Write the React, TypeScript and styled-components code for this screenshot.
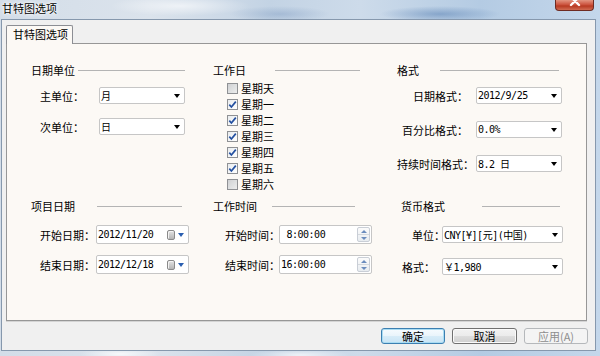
import React from 'react';
import styled, { createGlobalStyle } from 'styled-components';

const GlobalStyle = createGlobalStyle`
  html, body { margin: 0; padding: 0; }
  body {
    width: 600px; height: 356px; overflow: hidden;
    font-family: "Noto Sans CJK SC", "Noto Sans", sans-serif;
    font-size: 11px; color: #111;
  }
  * { box-sizing: border-box; }
`;

const Desktop = styled.div`
  width: 600px;
  height: 356px;
  display: flex;
  flex-direction: column;
  background:
    radial-gradient(ellipse 40px 6px at 120px 354px, rgba(255,255,255,0.8), transparent),
    radial-gradient(ellipse 50px 6px at 300px 355px, rgba(255,255,255,0.7), transparent),
    radial-gradient(ellipse 60px 8px at 440px 14px, rgba(90,130,180,0.55), transparent),
    radial-gradient(ellipse 50px 8px at 280px 14px, rgba(120,150,190,0.4), transparent),
    radial-gradient(ellipse 70px 10px at 180px 6px, rgba(255,255,255,0.6), transparent),
    linear-gradient(90deg, #d3dde8 0%, #dbe3ec 25%, #c3d3e4 45%, #cddbea 60%, #b4cbe3 80%, #c4d7eb 100%);
`;

const TitleBar = styled.div`
  height: 19px;
  flex: none;
  display: flex;
  justify-content: space-between;
  align-items: flex-start;
  padding: 0 6px 0 2px;
`;

const TitleText = styled.span`
  font-size: 11px;
  line-height: 14px;
  margin-top: 1px;
  color: #000;
  text-shadow: 0 0 5px #fff, 0 0 3px #fff, 0 0 1px #fff;
`;

const CloseButton = styled.div`
  width: 39px;
  height: 11px;
  overflow: hidden;
  border: 1px solid #6e2b22;
  border-top: none;
  border-radius: 0 0 4px 4px;
  background: linear-gradient(#e39480, #cc5540 45%, #b83a22 60%, #d06b52);
  display: flex;
  justify-content: center;
  align-items: flex-start;
`;

const Window = styled.div`
  flex: none;
  height: 332px;
  margin: 0 4px 0 1px;
  background: #f0f0f0;
  border: 1px solid #8698ad;
  padding: 5px 8px 6px 4px;
  display: flex;
  flex-direction: column;
`;

const TabStrip = styled.div`
  height: 18px;
  flex: none;
  display: flex;
  align-items: flex-start;
`;

const Tab = styled.div`
  position: relative;
  z-index: 1;
  width: 67px;
  height: 19px;
  border: 1px solid #8c8e94;
  border-bottom: none;
  border-radius: 2px 2px 0 0;
  background: #fcf9f5;
  padding-left: 6px;
  line-height: 17px;
  font-size: 11px;
  color: #000;
`;

const Panel = styled.div`
  flex: 1;
  border: 1px solid #979797;
  box-shadow: 0 1px 0 #d4d4d4;
  background: #fcf9f5;
  padding: 19px 0 0 24px;
  display: grid;
  grid-template-columns: 182px 184px 1fr;
  grid-template-rows: 136px 1fr;
`;

const Section = styled.div`
  display: flex;
  flex-direction: column;
`;

const Header = styled.div<{ $w: number; $indent?: number }>`
  display: flex;
  align-items: center;
  height: 14px;
  width: ${p => p.$w}px;
  padding-left: ${p => p.$indent ?? 0}px;
`;

const HeaderLabel = styled.span<{ $lw: number }>`
  width: ${p => p.$lw}px;
  flex: none;
  white-space: nowrap;
  line-height: 14px;
  color: #000;
`;

const HeaderRule = styled.div`
  flex: 1;
  height: 1px;
  background: #b4b4b4;
`;

const FieldRow = styled.div<{ $mt: number; $h: number }>`
  display: flex;
  align-items: center;
  margin-top: ${p => p.$mt}px;
  height: ${p => p.$h}px;
`;

const FieldLabel = styled.span<{ $w: number; $indent: number }>`
  width: ${p => p.$w}px;
  padding-left: ${p => p.$indent}px;
  flex: none;
  white-space: nowrap;
  color: #000;
`;

const Box = styled.div<{ $w: number }>`
  width: ${p => p.$w}px;
  height: 100%;
  border: 1px solid #c6c6c6;
  border-radius: 2px;
  background: #fff;
  display: flex;
  align-items: center;
  padding: 0 4px 0 1px;
  gap: 3px;
`;

const Value = styled.span`
  flex: 1;
  white-space: pre;
  font-family: "DejaVu Sans Mono", "Noto Sans CJK SC", monospace;
  font-size: 10px;
  letter-spacing: -0.5px;
  color: #000;
`;

const DropArrow = styled.span<{ $color?: string }>`
  width: 0;
  height: 0;
  flex: none;
  border-left: 3.5px solid transparent;
  border-right: 3.5px solid transparent;
  border-top: 4px solid ${p => p.$color ?? '#000'};
`;

const CalIcon = styled.span`
  width: 8px;
  height: 10px;
  flex: none;
  border: 1px solid #8a8a8a;
  border-radius: 2px;
  background: linear-gradient(#e2e2e2, #b4b4b4);
  box-shadow: inset 1px 1px 0 #f3f3f3;
`;

const Spinner = styled.div`
  width: 13px;
  height: 15px;
  flex: none;
  margin-right: -3px;
  display: flex;
  flex-direction: column;
  border: 1px solid #c9ced6;
  border-radius: 2px;
  background: linear-gradient(#fbfbfb, #e8ecf0);
`;

const SpinHalf = styled.div<{ $down?: boolean }>`
  flex: 1;
  display: flex;
  align-items: center;
  justify-content: center;
  border-top: ${p => (p.$down ? '1px solid #d3d8de' : 'none')};
  &::after {
    content: "";
    border-left: 3px solid transparent;
    border-right: 3px solid transparent;
    ${p => (p.$down ? 'border-top: 3px solid #6b8cbd;' : 'border-bottom: 3px solid #6b8cbd;')}
  }
`;

const CheckList = styled.div`
  margin-top: 3px;
  padding-left: 14px;
  display: flex;
  flex-direction: column;
`;

const CheckRow = styled.label`
  height: 16px;
  display: flex;
  align-items: center;
  gap: 3px;
  color: #000;
`;

const CheckBox = styled.span<{ $checked: boolean }>`
  width: 11px;
  height: 11px;
  flex: none;
  border: 1px solid #8f9194;
  background: ${p =>
    p.$checked
      ? 'linear-gradient(135deg, #e9ecef, #ffffff)'
      : 'linear-gradient(135deg, #cfd1d3, #eceded)'};
  display: flex;
  align-items: center;
  justify-content: center;
`;

const ButtonBar = styled.div`
  flex: none;
  display: flex;
  justify-content: flex-end;
  gap: 7px;
  margin-top: 7px;
  margin-right: -1px;
  height: 16px;
`;

const Button = styled.div<{ $w: number; $variant?: 'default' | 'disabled' }>`
  width: ${p => p.$w}px;
  height: 16px;
  border-radius: 3px;
  display: flex;
  align-items: center;
  justify-content: center;
  font-size: 11px;
  line-height: 14px;
  border: 1px solid
    ${p => (p.$variant === 'default' ? '#3c7fb1' : p.$variant === 'disabled' ? '#b5b8bb' : '#707070')};
  color: ${p => (p.$variant === 'disabled' ? '#8d8d8d' : '#000')};
  background: ${p =>
    p.$variant === 'disabled'
      ? '#f4f4f4'
      : p.$variant === 'default'
      ? 'linear-gradient(#f6fbfe 0%, #e9f4fb 50%, #d7ecf8 51%, #c9e4f5 100%)'
      : 'linear-gradient(#f2f2f2 0%, #ebebeb 50%, #dddddd 51%, #cfcfcf 100%)'};
  box-shadow: ${p =>
    p.$variant === 'default' ? 'inset 0 0 0 1px #a9dcf3' : p.$variant === 'disabled' ? 'none' : 'inset 0 0 0 1px #fafafa'};
`;

const Check = () => (
  <svg width="9" height="9" viewBox="0 0 9 9">
    <path d="M1.3 4.6 L3.4 7 L7.8 1.6" fill="none" stroke="#2450a0" strokeWidth="1.7" />
  </svg>
);

type SelectProps = { w: number; value: string };
const Select = ({ w, value }: SelectProps) => (
  <Box $w={w}>
    <Value>{value}</Value>
    <DropArrow />
  </Box>
);

const DateBox = ({ value }: { value: string }) => (
  <Box $w={93}>
    <Value>{value}</Value>
    <CalIcon />
    <DropArrow $color="#2b5fb0" />
  </Box>
);

const TimeBox = ({ value }: { value: string }) => (
  <Box $w={93}>
    <Value>{value}</Value>
    <Spinner>
      <SpinHalf />
      <SpinHalf $down />
    </Spinner>
  </Box>
);

const days = [
  { label: '星期天', checked: false },
  { label: '星期一', checked: true },
  { label: '星期二', checked: true },
  { label: '星期三', checked: true },
  { label: '星期四', checked: true },
  { label: '星期五', checked: true },
  { label: '星期六', checked: false },
];

export default function App() {
  return (
    <>
      <GlobalStyle />
      <Desktop>
        <TitleBar>
          <TitleText>甘特图选项</TitleText>
          <CloseButton>
            <svg width="12" height="10" viewBox="0 0 12 10" style={{ marginTop: -3 }}>
              <path d="M2 0 L10 8 M10 0 L2 8" stroke="#fff" strokeWidth="2.4" strokeLinecap="round" />
            </svg>
          </CloseButton>
        </TitleBar>
        <Window>
          <TabStrip>
            <Tab>甘特图选项</Tab>
          </TabStrip>
          <Panel>
            <Section>
              <Header $w={154}>
                <HeaderLabel $lw={47}>日期单位</HeaderLabel>
                <HeaderRule />
              </Header>
              <FieldRow $mt={10} $h={17}>
                <FieldLabel $w={68} $indent={9}>主单位：</FieldLabel>
                <Select w={86} value="月" />
              </FieldRow>
              <FieldRow $mt={14} $h={17}>
                <FieldLabel $w={68} $indent={9}>次单位：</FieldLabel>
                <Select w={86} value="日" />
              </FieldRow>
            </Section>

            <Section>
              <Header $w={147}>
                <HeaderLabel $lw={62}>工作日</HeaderLabel>
                <HeaderRule />
              </Header>
              <CheckList>
                {days.map(d => (
                  <CheckRow key={d.label}>
                    <CheckBox $checked={d.checked}>{d.checked && <Check />}</CheckBox>
                    {d.label}
                  </CheckRow>
                ))}
              </CheckList>
            </Section>

            <Section>
              <Header $w={162}>
                <HeaderLabel $lw={43}>格式</HeaderLabel>
                <HeaderRule />
              </Header>
              <FieldRow $mt={10} $h={17}>
                <FieldLabel $w={79} $indent={16}>日期格式：</FieldLabel>
                <Select w={86} value="2012/9/25" />
              </FieldRow>
              <FieldRow $mt={17} $h={17}>
                <FieldLabel $w={79} $indent={5}>百分比格式：</FieldLabel>
                <Select w={86} value="0.0%" />
              </FieldRow>
              <FieldRow $mt={17} $h={17}>
                <FieldLabel $w={79} $indent={0}>持续时间格式：</FieldLabel>
                <Select w={86} value="8.2 日" />
              </FieldRow>
            </Section>

            <Section>
              <Header $w={151}>
                <HeaderLabel $lw={66}>项目日期</HeaderLabel>
                <HeaderRule />
              </Header>
              <FieldRow $mt={12} $h={19}>
                <FieldLabel $w={65} $indent={9}>开始日期：</FieldLabel>
                <DateBox value="2012/11/20" />
              </FieldRow>
              <FieldRow $mt={11} $h={19}>
                <FieldLabel $w={65} $indent={9}>结束日期：</FieldLabel>
                <DateBox value="2012/12/18" />
              </FieldRow>
            </Section>

            <Section>
              <Header $w={142}>
                <HeaderLabel $lw={59}>工作时间</HeaderLabel>
                <HeaderRule />
              </Header>
              <FieldRow $mt={12} $h={19}>
                <FieldLabel $w={66} $indent={12}>开始时间：</FieldLabel>
                <TimeBox value=" 8:00:00" />
              </FieldRow>
              <FieldRow $mt={11} $h={19}>
                <FieldLabel $w={66} $indent={12}>结束时间：</FieldLabel>
                <TimeBox value="16:00:00" />
              </FieldRow>
            </Section>

            <Section>
              <Header $w={163} $indent={4}>
                <HeaderLabel $lw={81}>货币格式</HeaderLabel>
                <HeaderRule />
              </Header>
              <FieldRow $mt={13} $h={17}>
                <FieldLabel $w={45} $indent={15}>单位：</FieldLabel>
                <Select w={121} value="CNY[¥][元](中国)" />
              </FieldRow>
              <FieldRow $mt={15} $h={17}>
                <FieldLabel $w={45} $indent={5}>格式：</FieldLabel>
                <Select w={121} value="￥1,980" />
              </FieldRow>
            </Section>
          </Panel>
          <ButtonBar>
            <Button $w={64} $variant="default">确定</Button>
            <Button $w={65}>取消</Button>
            <Button $w={64} $variant="disabled">应用(A)</Button>
          </ButtonBar>
        </Window>
      </Desktop>
    </>
  );
}
